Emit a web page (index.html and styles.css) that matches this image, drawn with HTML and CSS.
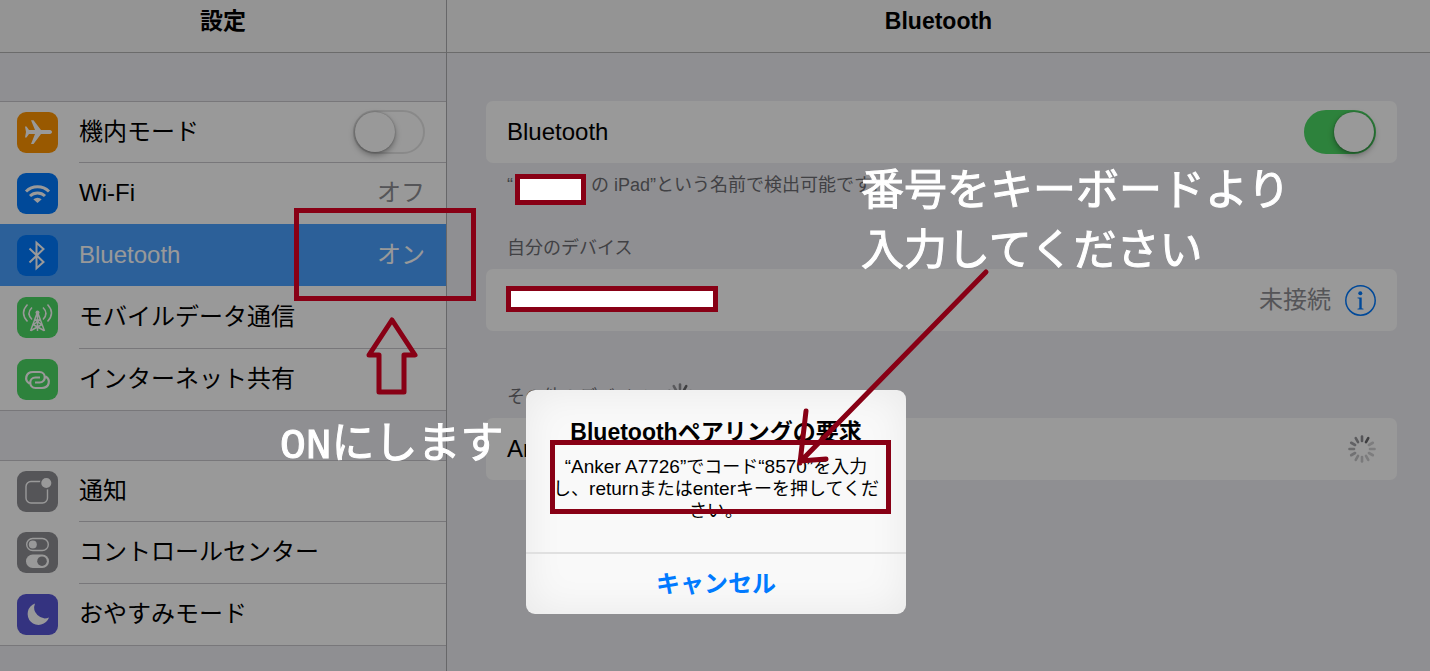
FILE: index.html
```html
<!DOCTYPE html>
<html lang="ja">
<head>
<meta charset="utf-8">
<meta name="viewport" content="width=device-width, initial-scale=1">
<title>設定 - Bluetooth</title>
<link rel="stylesheet" href="styles.css">
</head>
<body>
<svg class="defs" aria-hidden="true">
  <symbol id="spinner" viewBox="0 0 28 28">
    <g stroke="#8e8e93" stroke-width="2.6" stroke-linecap="round">
      <path d="M14 1.5V6"/>
      <path d="M14 1.5V6" transform="rotate(30 14 14)" stroke="#6a6a6d"/>
      <path d="M14 1.5V6" transform="rotate(60 14 14)" opacity=".4"/>
      <path d="M14 1.5V6" transform="rotate(90 14 14)" opacity=".4"/>
      <path d="M14 1.5V6" transform="rotate(120 14 14)" opacity=".4"/>
      <path d="M14 1.5V6" transform="rotate(150 14 14)" opacity=".42"/>
      <path d="M14 1.5V6" transform="rotate(180 14 14)" opacity=".45"/>
      <path d="M14 1.5V6" transform="rotate(210 14 14)" opacity=".5"/>
      <path d="M14 1.5V6" transform="rotate(240 14 14)" opacity=".58"/>
      <path d="M14 1.5V6" transform="rotate(270 14 14)" opacity=".68"/>
      <path d="M14 1.5V6" transform="rotate(300 14 14)" opacity=".8"/>
      <path d="M14 1.5V6" transform="rotate(330 14 14)" opacity=".9"/>
    </g>
  </symbol>
</svg>
<div class="app">
  <aside class="sidebar">
    <header class="bar"><h1>設定</h1></header>
    <nav class="groups">
      <ul class="group">
        <li class="row">
          <span class="icon orange"><svg viewBox="0 0 41 41"><path fill="#fff" d="M35 20c0-1.500-1.500-2-3-2h-8L16.500 8.300H14L18 18h-6l-2.500-3.500H8L9 20l-1 5.500h1.500L12 22h6l-4 10h2.500L24 22h8c1.500 0 3-.5 3-2z"/></svg></span>
          <label class="name" for="airplane">機内モード</label>
          <input class="switch" type="checkbox" id="airplane">
        </li>
        <li class="row">
          <span class="icon blue"><svg viewBox="0 0 41 41"><g fill="none" stroke="#fff" stroke-width="3"><path d="M9 18.500a16.500 16.500 0 0 1 23 0"/><path d="M13 23a11 11 0 0 1 15 0"/></g><path fill="#fff" d="M16.300 26.200q4.200-3 8.400 0L20.500 30z"/></svg></span>
          <a class="name" href="#wifi">Wi-Fi</a><span class="value">オフ</span>
        </li>
        <li class="row selected">
          <span class="icon blue"><svg viewBox="0 0 41 41"><path fill="none" stroke="#fff" stroke-width="2" d="M12.500 13.500l14 13.500-7 6.300V7.700l7 6.300-14 13.500"/></svg></span>
          <a class="name" href="#bluetooth">Bluetooth</a><span class="value">オン</span>
        </li>
        <li class="row">
          <span class="icon green"><svg viewBox="0 0 41 41"><g fill="none" stroke="#fff" stroke-width="1.500"><path d="M20.500 15l-7 19M20.500 15l7 19M20.500 15v19M17.800 23h5.400M16 27.500l11 6M25 27.500l-11 6M18 23l6.500 4.500M23 23l-6.500 4.500"/><path d="M15 10.500q-6 6 0 12M26 10.500q6 6 0 12M10.500 7.500q-8 8.500 0 17M30.500 7.500q8 8.500 0 17"/></g><circle cx="20.500" cy="15.500" r="2" fill="#fff"/></svg></span>
          <a class="name" href="#cellular">モバイルデータ通信</a>
        </li>
        <li class="row">
          <span class="icon green"><svg viewBox="0 0 41 41"><path fill="none" stroke="#fff" stroke-width="2.200" d="M12.500 24.500C7 21.500 8.500 13 16 13h6.500c7 0 7 10.500 0 10.500H18M28.500 17.500c5.500 3 4 11.500-3.500 11.500h-6.500c-7 0-7-10.500 0-10.500H23"/></svg></span>
          <a class="name" href="#hotspot">インターネット共有</a>
        </li>
      </ul>
      <ul class="group">
        <li class="row">
          <span class="icon gray"><svg viewBox="0 0 41 41"><rect x="9" y="10.500" width="21.500" height="21.500" rx="5" fill="none" stroke="#fff" stroke-width="1.400"/><circle cx="29.300" cy="12" r="5.800" fill="#fff" stroke="#8e8e93" stroke-width="1.500"/></svg></span>
          <a class="name" href="#notifications">通知</a>
        </li>
        <li class="row">
          <span class="icon gray"><svg viewBox="0 0 41 41"><rect x="9.700" y="6.500" width="21.600" height="12" rx="6" fill="none" stroke="#fff" stroke-width="1.400"/><circle cx="15.800" cy="12.500" r="4" fill="#fff"/><rect x="9" y="22.500" width="23" height="13.500" rx="6.700" fill="#fff"/><circle cx="25" cy="29.200" r="4.800" fill="#8e8e93"/></svg></span>
          <a class="name" href="#control">コントロールセンター</a>
        </li>
        <li class="row">
          <span class="icon purple"><svg viewBox="0 0 41 41"><path fill="#fff" d="M18 9.500A11 11 0 1 0 32 23.500 10.800 10.800 0 0 1 18 9.500z"/></svg></span>
          <a class="name" href="#dnd">おやすみモード</a>
        </li>
      </ul>
    </nav>
  </aside>
  <main class="detail">
    <header class="bar"><h2>Bluetooth</h2></header>
    <div class="content">
      <div class="card"><label for="bt">Bluetooth</label><input class="switch" type="checkbox" id="bt" checked></div>
      <p class="note">“<span class="blank"></span>の iPad”という名前で検出可能です。</p>
      <h3 class="caption">自分のデバイス</h3>
      <div class="card"><span class="status">未接続</span>
        <button class="info" type="button" aria-label="詳細"><svg viewBox="0 0 31 31"><circle cx="15.500" cy="15.500" r="14.700" fill="none" stroke="#007aff" stroke-width="1.500"/><circle cx="15.300" cy="8.200" r="2" fill="#007aff"/><path fill="#007aff" d="M12.500 12.500h4.200v10.800l1.800.5v.7h-6v-.7l1.800-.5v-9.600l-1.800-.5z"/></svg></button>
      </div>
      <h3 class="caption far">その他のデバイス<svg class="spin"><use href="#spinner"/></svg></h3>
      <div class="card"><span>Anker A7726</span><svg class="spin end"><use href="#spinner"/></svg></div>
    </div>
  </main>
</div>
<div class="backdrop"></div>
<section class="dialog" role="alertdialog" aria-labelledby="dlg-title" aria-describedby="dlg-text">
  <div class="dialog-body">
    <h2 id="dlg-title">Bluetoothペアリングの要求</h2>
    <p id="dlg-text"><span class="latin">“Anker A7726”</span>でコード<span class="latin">“8570”</span>を入力<br>し、<span class="latin">return</span>または<span class="latin">enter</span>キーを押してくだ<br>さい。</p>
  </div>
  <button class="cancel" type="button">キャンセル</button>
</section>
<div class="marks">
  <div class="box on-box"></div>
  <div class="box code-box"></div>
  <div class="box mask owner-mask"></div>
  <div class="box mask device-mask"></div>
  <svg class="arrow up-arrow" viewBox="0 0 54 80"><path d="M27 4L50 39H39V76H14V39H4Z"/></svg>
  <svg class="arrow long-arrow" viewBox="0 0 200 210"><path d="M193 8L7 198M13 147L7 199M7 197L33 195"/></svg>
  <p class="hand on-text"><span>ON</span>にします</p>
  <p class="hand code-text">番号をキーボードより<br>入力してください</p>
</div>
</body>
</html>
```

FILE: styles.css
```css
* { box-sizing: border-box; }

body {
  margin: 0;
  font-family: "Liberation Sans", "Noto Sans CJK JP", sans-serif;
  font-size: 24px;
  line-height: 32px;
  color: #000;
  background: #efeff4;
}

h1, h2, h3, p, ul { margin: 0; padding: 0; font-size: inherit; font-weight: inherit; }
ul { list-style: none; }
a { color: inherit; text-decoration: none; }
button { font: inherit; border: 0; padding: 0; background: none; }
svg { display: block; }
.defs { position: absolute; width: 0; height: 0; }

.app { display: flex; min-height: 100vh; }
.sidebar { flex: 0 0 447px; border-right: 1px solid #acacb0; }
.detail { flex: 1; min-width: 0; }

.bar {
  height: 53px;
  padding-top: 5px;
  border-bottom: 1px solid #b2b2b2;
  background: #f7f7f7;
  text-align: center;
}
.bar h1, .bar h2 { font-size: 23px; font-weight: bold; }

.groups { display: flex; flex-direction: column; gap: 49px; padding-top: 48px; }
.group { border-top: 1px solid #c8c7cc; border-bottom: 1px solid #c8c7cc; background: #fff; }
.row { position: relative; display: flex; align-items: center; height: 62px; padding: 0 21px 0 17px; }
.group .row:first-child { height: 60px; }
.row + .row::before {
  content: "";
  position: absolute;
  top: 0;
  left: 79px;
  right: 0;
  border-top: 1px solid #c8c7cc;
}
.row.selected { background: #4aa1ff; color: #fff; }
.row.selected::before, .row.selected + .row::before { display: none; }
.name { flex: 1; }
.value, .status { color: #8e8e93; }
.selected .value { color: #fff; }

.icon { width: 41px; height: 41px; margin-right: 21px; border-radius: 9px; }
.orange { background: #ff9500; }
.blue { background: #007aff; }
.green { background: #4cd964; }
.gray { background: #8e8e93; }
.purple { background: #5856d6; }

.switch {
  appearance: none;
  width: 72px;
  height: 44px;
  margin: 0 0 0 auto;
  border: 2px solid #e5e5e5;
  border-radius: 22px;
  display: flex;
}
.switch::before {
  content: "";
  width: 40px;
  height: 40px;
  border-radius: 50%;
  background: #fff;
  box-shadow: 0 3px 6px rgba(0, 0, 0, .35), 0 0 2px rgba(0, 0, 0, .3);
}
.switch:checked { background: #4cd964; border-color: #4cd964; justify-content: flex-end; }

.content { padding: 48px 33px 0 39px; }
.card {
  display: flex;
  align-items: center;
  height: 62px;
  padding: 0 21px;
  border-radius: 7px;
  background: #fff;
}
.note, .caption { padding: 0 21px; font-size: 18px; line-height: 24px; color: #6d6d72; }
.note { padding-top: 10px; }
.caption { margin-top: 39px; margin-bottom: 9px; }
.caption.far { display: flex; align-items: center; gap: 16px; height: 24px; margin-top: 54px; }
.blank { display: inline-block; width: 78px; }
.status { margin-left: auto; margin-right: 14px; }
.info, .info svg { width: 31px; height: 31px; }
.spin { width: 28px; height: 28px; }
.end { margin-left: auto; }

.backdrop { position: fixed; inset: 0; background: rgba(0, 0, 0, .4); }

.dialog {
  position: absolute;
  top: 390px;
  left: calc(50% - 189px);
  width: 380px;
  border-radius: 9px;
  background: #f9f9f9;
  box-shadow: inset 0 0 40px rgba(0, 0, 0, .07);
  text-align: center;
}
.dialog-body { padding: 28px 0 30px; border-bottom: 2px solid #e0e0e0; }
.dialog h2 { font-size: 23px; line-height: 28px; font-weight: bold; white-space: nowrap; }
.dialog p { margin-top: 10px; font-size: 18px; line-height: 22px; white-space: nowrap; }
.dialog .latin { font-size: 19px; }
.cancel { width: 100%; height: 60px; font-weight: bold; color: #007aff; }

.marks { position: absolute; top: 0; left: 0; width: 100%; height: 100%; pointer-events: none; }
.box { position: absolute; border: 5px solid #880015; }
.on-box { left: 294px; top: 208px; width: 182px; height: 93px; }
.code-box { left: calc(50% - 165px); top: 440px; width: 341px; height: 74px; }
.mask { background: #fff; }
.owner-mask { left: 515px; top: 174px; width: 71px; height: 31px; }
.device-mask { left: 506px; top: 286px; width: 212px; height: 26px; }
.arrow { position: absolute; fill: none; stroke: #880015; stroke-width: 5; stroke-linecap: round; stroke-linejoin: round; }
.up-arrow { left: 365px; top: 316px; width: 54px; height: 80px; }
.long-arrow { left: calc(50% + 78px); top: 264px; width: 200px; height: 210px; }
.hand {
  position: absolute;
  font-family: "Noto Sans CJK JP", sans-serif;
  font-size: 43px;
  line-height: 60px;
  color: #fff;
  -webkit-text-stroke: 1px #fff;
  white-space: nowrap;
}
.hand span { font-family: "Liberation Mono", monospace; }
.on-text { left: 280px; top: 409px; }
.code-text { left: calc(50% + 146px); top: 156px; }
```
